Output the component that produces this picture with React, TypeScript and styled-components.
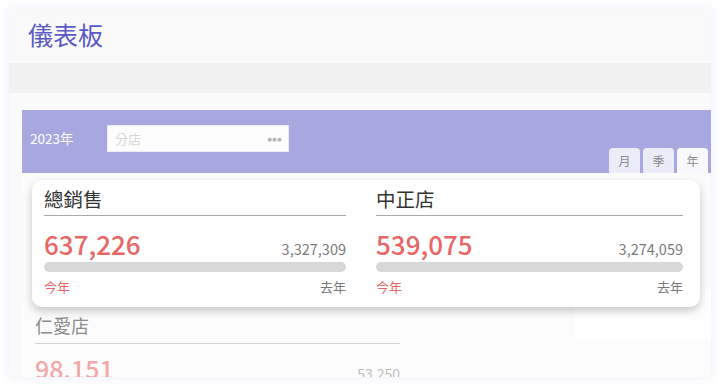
import React from "react";
import styled, { createGlobalStyle } from "styled-components";

const Global = createGlobalStyle`
  html, body { margin: 0; padding: 0; background: #ffffff; }
  body { font-family: "Noto Sans CJK TC", "Noto Sans", sans-serif; }
  * { box-sizing: border-box; }
`;

const Page = styled.div`
  width: 721px;
  height: 387px;
  padding: 9px 10px 10px 9px;
  overflow: hidden;
`;

const Panel = styled.div`
  height: 368px;
  background: #fafafa;
  box-shadow: 0 0 8px rgba(110, 110, 255, 0.14);
  overflow: hidden;
  display: flex;
  flex-direction: column;
`;

const Header = styled.header`
  flex-shrink: 0;
  height: 54px;
  background: #f9f9f9;
  display: flex;
  align-items: center;
  padding-left: 19px;
`;

const Title = styled.h1`
  margin: 0;
  font-size: 25px;
  font-weight: 400;
  color: #5a5ac6;
  line-height: 1;
  padding-bottom: 4px;
`;

const Band = styled.div`
  flex-shrink: 0;
  height: 30px;
  background: #f1f1f1;
`;

const Body = styled.div`
  flex: 1 0 auto;
  padding: 17px 0 0 13px;
  display: flex;
  flex-direction: column;
`;

const FilterBar = styled.div`
  flex-shrink: 0;
  height: 63px;
  background: #a8a8e0;
  display: flex;
  align-items: flex-start;
  padding: 15px 3px 0 8px;
  position: relative;
`;

const Year = styled.span`
  color: #ffffff;
  font-size: 13.5px;
  line-height: 27px;
  width: 77px;
`;

const Select = styled.div`
  width: 182px;
  height: 27px;
  background: #fdfdfd;
  border: 1px solid #ececf8;
  display: flex;
  align-items: center;
  justify-content: space-between;
  padding: 0 6px 0 7px;
  font-size: 13px;
  color: #d6d6d6;
`;

const Dots = styled.span`
  color: #b4b4b4;
  font-size: 5px;
  letter-spacing: 0.5px;
  font-family: "DejaVu Sans", sans-serif;
`;

const Tabs = styled.div`
  margin-left: auto;
  align-self: flex-end;
  display: flex;
  gap: 3px;
`;

const Tab = styled.div<{ $active?: boolean }>`
  width: 31px;
  height: 25px;
  border-radius: 4px 4px 0 0;
  background: ${(p) => (p.$active ? "#f9f9fd" : "#ececf9")};
  color: #8a8a8a;
  font-size: 12px;
  display: flex;
  align-items: center;
  justify-content: center;
`;

const Content = styled.div`
  flex: 1;
  position: relative;
  background: #fcfcfd;
  display: grid;
  grid-template-columns: 378px 1fr 137px;
  align-items: start;
  padding-top: 117px;
`;

const FadedCard = styled.div`
  margin-top: 23px;
  padding-left: 13px;
`;

const FadedTitle = styled.div`
  font-size: 18px;
  line-height: 24px;
  color: #8c8c8c;
  padding-bottom: 6px;
  border-bottom: 1px solid #d4d4d4;
`;

const FadedNums = styled.div`
  display: flex;
  justify-content: space-between;
  align-items: baseline;
  margin-top: 6px;
`;

const FadedBig = styled.span`
  font-size: 25px;
  font-weight: 500;
  color: #f2a8a8;
`;

const FadedSmall = styled.span`
  font-size: 14px;
  color: #bbbbbb;
`;

const WhiteBlock = styled.div`
  grid-column: 3;
  height: 50px;
  background: #ffffff;
`;

const Popup = styled.div`
  position: absolute;
  top: 7px;
  left: 10px;
  right: 11px;
  height: 127px;
  background: #ffffff;
  border-radius: 10px;
  box-shadow: 0 4px 10px rgba(0, 0, 0, 0.22);
  display: grid;
  grid-template-columns: 302px 307px;
  column-gap: 30px;
  padding: 6px 0 0 12px;
`;

const Stat = styled.div`
  display: flex;
  flex-direction: column;
`;

const StatTitle = styled.div`
  font-size: 19.5px;
  line-height: 26px;
  color: #333333;
  padding-bottom: 3px;
  border-bottom: 1px solid #a9a9a9;
`;

const NumRow = styled.div`
  display: flex;
  justify-content: space-between;
  align-items: baseline;
  margin-top: 12px;
  height: 32px;
`;

const Big = styled.span`
  font-size: 26px;
  font-weight: 500;
  line-height: 32px;
  color: #e76767;
`;

const Small = styled.span`
  font-size: 14.5px;
  color: #7a7a7a;
`;

const Track = styled.div`
  height: 10px;
  border-radius: 5px;
  background: #d8d8d8;
  margin-top: 2px;
`;

const Legend = styled.div`
  display: flex;
  justify-content: space-between;
  font-size: 13px;
  line-height: 18px;
  margin-top: 6px;
`;

const ThisYear = styled.span`
  color: #e76767;
`;

const LastYear = styled.span`
  color: #777777;
`;

const stats = [
  { name: "總銷售", now: "637,226", last: "3,327,309" },
  { name: "中正店", now: "539,075", last: "3,274,059" },
];

export default function App() {
  return (
    <>
      <Global />
      <Page>
        <Panel>
          <Header>
            <Title>儀表板</Title>
          </Header>
          <Band />
          <Body>
            <FilterBar>
              <Year>2023年</Year>
              <Select>
                <span>分店</span>
                <Dots>●●●</Dots>
              </Select>
              <Tabs>
                <Tab>月</Tab>
                <Tab>季</Tab>
                <Tab $active>年</Tab>
              </Tabs>
            </FilterBar>
            <Content>
              <FadedCard>
                <FadedTitle>仁愛店</FadedTitle>
                <FadedNums>
                  <FadedBig>98,151</FadedBig>
                  <FadedSmall>53,250</FadedSmall>
                </FadedNums>
              </FadedCard>
              <WhiteBlock />
              <Popup>
                {stats.map((s) => (
                  <Stat key={s.name}>
                    <StatTitle>{s.name}</StatTitle>
                    <NumRow>
                      <Big>{s.now}</Big>
                      <Small>{s.last}</Small>
                    </NumRow>
                    <Track />
                    <Legend>
                      <ThisYear>今年</ThisYear>
                      <LastYear>去年</LastYear>
                    </Legend>
                  </Stat>
                ))}
              </Popup>
            </Content>
          </Body>
        </Panel>
      </Page>
    </>
  );
}
